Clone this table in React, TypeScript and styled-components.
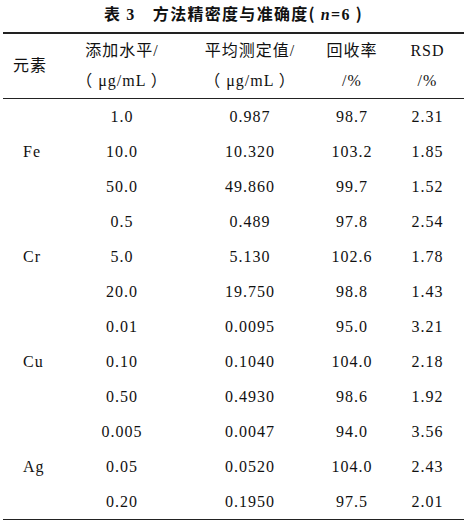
import styled, { createGlobalStyle } from "styled-components";

const GlobalStyle = createGlobalStyle`
  body {
    margin: 0;
    background: #fff;
    color: #111;
    font-family: "Liberation Serif", "Noto Sans CJK SC", serif;
  }
`;

const Page = styled.div`
  width: 461px;
  padding: 0 3px;
`;

const Caption = styled.div`
  height: 27px;
  line-height: 27px;
  margin-bottom: 5px;
  text-align: center;
  font-family: "Noto Sans CJK SC", sans-serif;
  font-size: 16px;
  font-weight: 700;
  letter-spacing: 1.3px;
  white-space: pre;
`;

const Num = styled.span<{ $italic?: boolean }>`
  font-family: "Liberation Serif", serif;
  font-weight: 700;
  font-style: ${(p) => (p.$italic ? "italic" : "normal")};
`;

const Table = styled.table`
  width: 461px;
  border-collapse: separate;
  border-spacing: 0;
  table-layout: fixed;
  border-top: 2px solid #222;
  border-bottom: 1px solid #222;
  font-size: 16px;
  letter-spacing: 1px;
`;

const Th = styled.th`
  height: 64px;
  padding: 0;
  border-bottom: 1px solid #222;
  font-weight: 400;
  line-height: 30px;
  text-align: center;
  vertical-align: middle;
  white-space: nowrap;
`;

const Td = styled.td<{ $left?: boolean }>`
  height: 35px;
  padding: 0 0 0 ${(p) => (p.$left ? "20px" : "0")};
  text-align: ${(p) => (p.$left ? "left" : "center")};
  vertical-align: middle;
  white-space: nowrap;
`;

interface Group {
  el: string;
  rows: [string, string, string, string][];
}

const groups: Group[] = [
  {
    el: "Fe",
    rows: [
      ["1.0", "0.987", "98.7", "2.31"],
      ["10.0", "10.320", "103.2", "1.85"],
      ["50.0", "49.860", "99.7", "1.52"],
    ],
  },
  {
    el: "Cr",
    rows: [
      ["0.5", "0.489", "97.8", "2.54"],
      ["5.0", "5.130", "102.6", "1.78"],
      ["20.0", "19.750", "98.8", "1.43"],
    ],
  },
  {
    el: "Cu",
    rows: [
      ["0.01", "0.0095", "95.0", "3.21"],
      ["0.10", "0.1040", "104.0", "2.18"],
      ["0.50", "0.4930", "98.6", "1.92"],
    ],
  },
  {
    el: "Ag",
    rows: [
      ["0.005", "0.0047", "94.0", "3.56"],
      ["0.05", "0.0520", "104.0", "2.43"],
      ["0.20", "0.1950", "97.5", "2.01"],
    ],
  },
];

export default function App() {
  return (
    <Page>
      <GlobalStyle />
      <Caption>
        表 <Num>3</Num>{"　"}方法精密度与准确度( <Num $italic>n</Num>
        <Num>=6</Num> )
      </Caption>
      <Table>
        <colgroup>
          <col style={{ width: 54 }} />
          <col style={{ width: 130 }} />
          <col style={{ width: 126 }} />
          <col style={{ width: 78 }} />
          <col style={{ width: 73 }} />
        </colgroup>
        <thead>
          <tr>
            <Th>元素</Th>
            <Th>
              添加水平/
              <br />（ μg/mL ）
            </Th>
            <Th>
              平均测定值/
              <br />（ μg/mL ）
            </Th>
            <Th>
              回收率
              <br />
              /%
            </Th>
            <Th>
              RSD
              <br />
              /%
            </Th>
          </tr>
        </thead>
        <tbody>
          {groups.map((g) =>
            g.rows.map((r, i) => (
              <tr key={g.el + i}>
                {i === 0 && (
                  <Td $left rowSpan={3}>
                    {g.el}
                  </Td>
                )}
                {r.map((v, j) => (
                  <Td key={j}>{v}</Td>
                ))}
              </tr>
            ))
          )}
        </tbody>
      </Table>
    </Page>
  );
}
